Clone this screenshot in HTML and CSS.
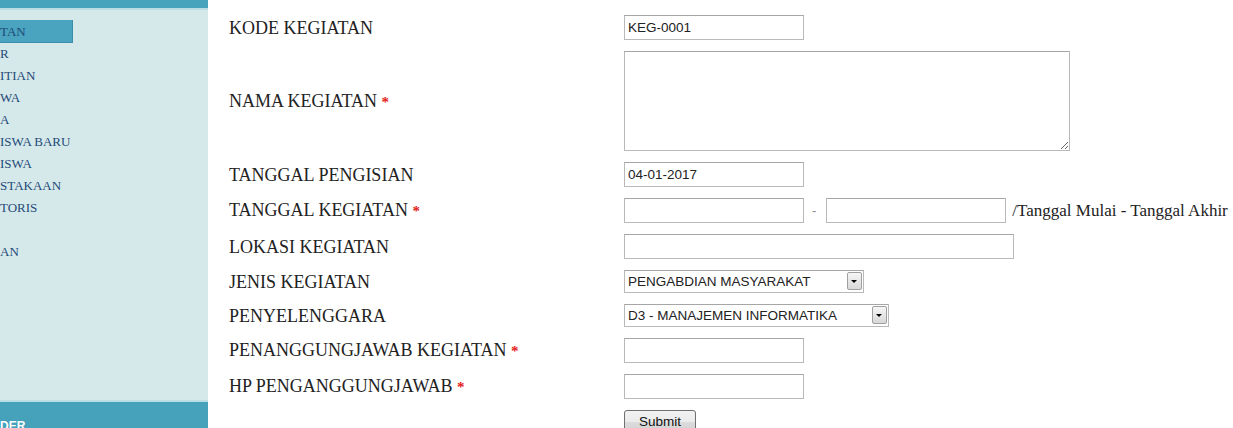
FILE: index.html
```html
<!DOCTYPE html>
<html lang="id">
<head>
    <meta charset="UTF-8">
    <title>Tambah Kegiatan</title>
    <link rel="stylesheet" href="styles.css">
</head>
<body>
    <div class="page">
        <div class="sidebar">
            <div class="sidebar-top"></div>
            <ul class="menu">
                <li class="active"><a href="#">TAN</a></li>
                <li><a href="#">R</a></li>
                <li><a href="#">ITIAN</a></li>
                <li><a href="#">WA</a></li>
                <li><a href="#">A</a></li>
                <li><a href="#">ISWA BARU</a></li>
                <li><a href="#">ISWA</a></li>
                <li><a href="#">STAKAAN</a></li>
                <li><a href="#">TORIS</a></li>
                <li><a href="#"></a></li>
                <li><a href="#">AN</a></li>
            </ul>
            <div class="sidebar-bottom">DER</div>
        </div>

        <div class="content">
            <form class="form-kegiatan" onsubmit="return false">
                <label>KODE KEGIATAN</label>
                <div class="field"><input type="text" class="input-short" value="KEG-0001"></div>

                <label>NAMA KEGIATAN <span class="req">*</span></label>
                <div class="field"><textarea></textarea></div>

                <label>TANGGAL PENGISIAN</label>
                <div class="field"><input type="text" class="input-short" value="04-01-2017"></div>

                <label>TANGGAL KEGIATAN <span class="req">*</span></label>
                <div class="field">
                    <input type="text" class="input-short">
                    <span class="sep">-</span>
                    <input type="text" class="input-short">
                    <span class="hint">/Tanggal Mulai - Tanggal Akhir</span>
                </div>

                <label>LOKASI KEGIATAN</label>
                <div class="field"><input type="text" class="input-long"></div>

                <label>JENIS KEGIATAN</label>
                <div class="field">
                    <div class="select-wrap">
                        <select class="select-jenis">
                            <option>PENGABDIAN MASYARAKAT</option>
                            <option>PENELITIAN</option>
                            <option>SEMINAR</option>
                        </select>
                        <span class="select-btn"></span>
                    </div>
                </div>

                <label>PENYELENGGARA</label>
                <div class="field">
                    <div class="select-wrap">
                        <select class="select-prodi">
                            <option>D3 - MANAJEMEN INFORMATIKA</option>
                            <option>S1 - TEKNIK INFORMATIKA</option>
                        </select>
                        <span class="select-btn"></span>
                    </div>
                </div>

                <label>PENANGGUNGJAWAB KEGIATAN <span class="req">*</span></label>
                <div class="field"><input type="text" class="input-short"></div>

                <label>HP PENGANGGUNGJAWAB <span class="req">*</span></label>
                <div class="field"><input type="text" class="input-short"></div>

                <span></span>
                <div class="field"><button type="submit" class="btn-submit">Submit</button></div>
            </form>
        </div>
    </div>
</body>
</html>
```

FILE: styles.css
```css
html, body {
    margin: 0;
    padding: 0;
    height: 100%;
    overflow: hidden;
    background-color: #fff;
}

.page {
    display: flex;
    height: 100vh;
}

/* sidebar */
.sidebar {
    width: 208px;
    flex-shrink: 0;
    background-color: #d6e9ea;
    display: flex;
    flex-direction: column;
}

.sidebar-top {
    height: 8px;
    background-color: #47a2bc;
    border-bottom: 2px solid #bcdde4;
}

.menu {
    list-style: none;
    margin: 0;
    padding: 10px 0 0 0;
}

.menu li a {
    display: block;
    width: 73px;
    height: 22px;
    line-height: 23px;
    white-space: nowrap;
    box-sizing: border-box;
    font-family: "Liberation Serif", "Times New Roman", serif;
    font-size: 13px;
    color: #1f4a78;
    text-decoration: none;
}

.menu li.active a {
    background-color: #4aa3bf;
    border-right: 1px solid #3d8fa9;
    border-bottom: 1px solid #3d8fa9;
    height: 23px;
    margin-bottom: -1px;
}

.sidebar-bottom {
    margin-top: auto;
    height: 28px;
    background-color: #46a1bb;
    border-top: 2px solid #bcdde4;
    font-family: "Liberation Sans", Arial, sans-serif;
    font-weight: bold;
    font-size: 12px;
    color: #fff;
    padding-top: 17px;
    box-sizing: border-box;
    overflow: hidden;
}

/* form */
.content {
    padding: 15px 0 0 21px;
    flex: 1;
}

.form-kegiatan {
    display: grid;
    grid-template-columns: 395px auto;
    row-gap: 11px;
    align-items: center;
}

.form-kegiatan label {
    font-family: "Liberation Serif", "Times New Roman", serif;
    font-size: 18px;
    color: #222;
    line-height: 20px;
}

.req {
    color: #e21b1b;
    font-weight: bold;
    font-size: 15px;
}

.field {
    display: flex;
    align-items: center;
}

.field input,
.field textarea,
.field select {
    font-family: "Liberation Sans", Arial, sans-serif;
    font-size: 13.5px;
    color: #222;
    border: 1px solid #b9b9b9;
    border-top-color: #a6a6a6;
    box-sizing: border-box;
    margin: 0;
    border-radius: 0;
    outline: none;
}

.field input {
    height: 25px;
    padding: 2px 3px;
}

.input-short {
    width: 180px;
}

.input-long {
    width: 390px;
}

textarea {
    width: 446px;
    height: 100px;
    padding: 2px;
}

.sep {
    font-family: "Liberation Sans", Arial, sans-serif;
    font-size: 13px;
    color: #888;
    margin: 0 10px 0 8px;
}

.hint {
    font-family: "Liberation Serif", "Times New Roman", serif;
    font-size: 17px;
    color: #222;
    margin-left: 6px;
    white-space: nowrap;
}

/* select with the little dropdown button */
.select-wrap {
    position: relative;
}

.field select {
    -webkit-appearance: none;
    appearance: none;
    height: 23px;
    padding: 0 18px 0 3px;
    background-color: #fff;
    display: block;
}

.select-jenis {
    width: 240px;
}

.select-prodi {
    width: 265px;
}

.select-btn {
    position: absolute;
    right: 2px;
    top: 2px;
    width: 15px;
    height: 18px;
    box-sizing: border-box;
    border: 1px solid #a0a0a0;
    border-radius: 2px;
    background: linear-gradient(#f6f6f6, #d8d8d8);
    pointer-events: none;
}

.select-btn::after {
    content: "";
    position: absolute;
    left: 3px;
    top: 7px;
    border-left: 3.5px solid transparent;
    border-right: 3.5px solid transparent;
    border-top: 3.5px solid #000;
}

.btn-submit {
    font-family: "Liberation Sans", Arial, sans-serif;
    font-size: 13.5px;
    color: #111;
    width: 72px;
    height: 23px;
    padding: 0;
    border: 1px solid #707070;
    border-radius: 3px;
    background: linear-gradient(#f2f2f2 0%, #ebebeb 50%, #dddddd 51%, #cfcfcf 100%);
    cursor: pointer;
}
```
